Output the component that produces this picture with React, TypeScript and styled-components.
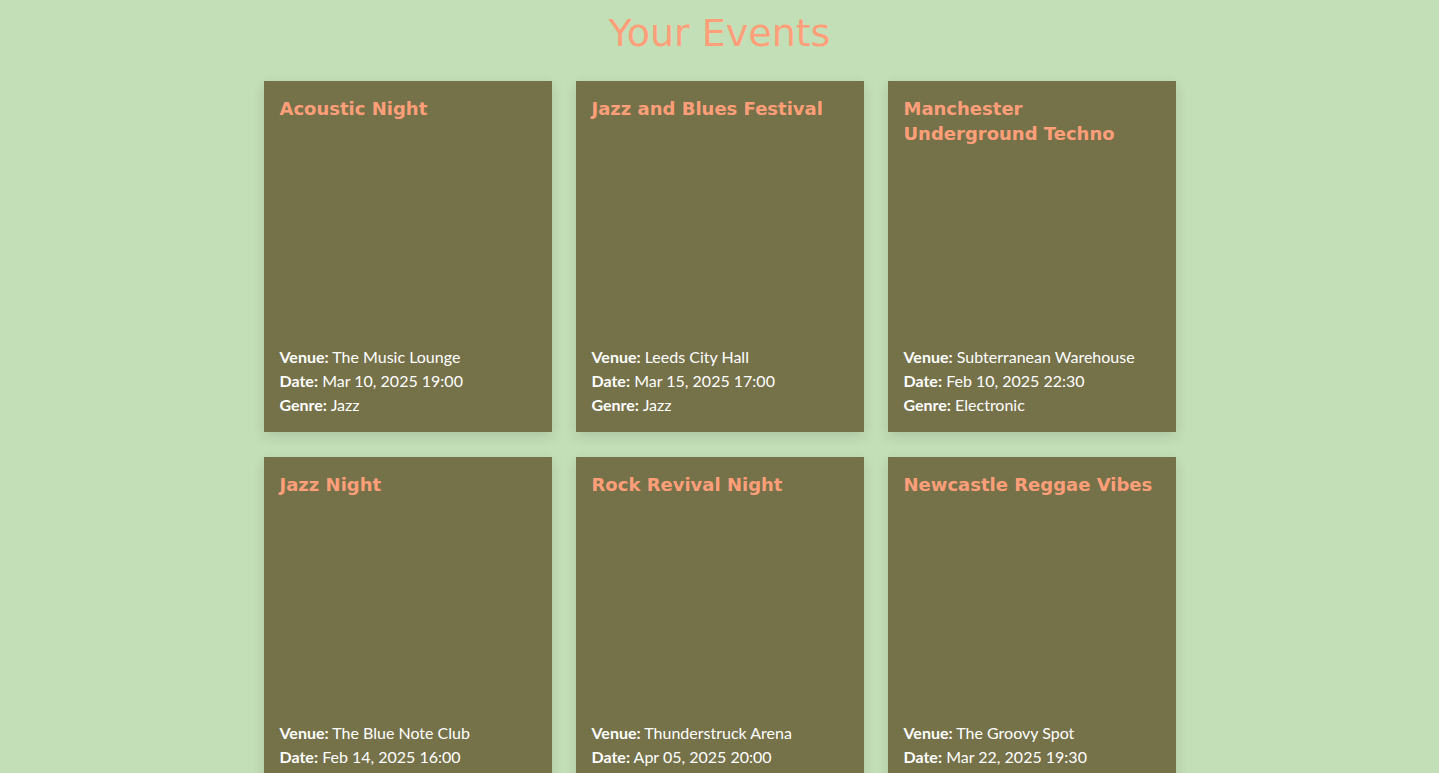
import React from 'react';
import styled, { createGlobalStyle } from 'styled-components';

interface EventItem {
    title: string;
    venue: string;
    date: string;
    genre: string;
}

const events: EventItem[] = [
    { title: 'Acoustic Night', venue: 'The Music Lounge', date: 'Mar 10, 2025 19:00', genre: 'Jazz' },
    { title: 'Jazz and Blues Festival', venue: 'Leeds City Hall', date: 'Mar 15, 2025 17:00', genre: 'Jazz' },
    { title: 'Manchester Underground Techno', venue: 'Subterranean Warehouse', date: 'Feb 10, 2025 22:30', genre: 'Electronic' },
    { title: 'Jazz Night', venue: 'The Blue Note Club', date: 'Feb 14, 2025 16:00', genre: 'Jazz' },
    { title: 'Rock Revival Night', venue: 'Thunderstruck Arena', date: 'Apr 05, 2025 20:00', genre: 'Rock' },
    { title: 'Newcastle Reggae Vibes', venue: 'The Groovy Spot', date: 'Mar 22, 2025 19:30', genre: 'Reggae' },
];

const GlobalStyle = createGlobalStyle`
    body {
        margin: 0;
        background-color: #c3dfb7;
        font-family: 'Lato', 'Open Sans', sans-serif;
    }
`;

const Page = styled.div`
    padding: 8px 0 40px;
`;

const Heading = styled.h1`
    margin: 0 0 23px;
    text-align: center;
    font-family: 'DejaVu Sans', 'Open Sans', sans-serif;
    font-weight: 400;
    font-size: 38px;
    line-height: 50px;
    color: #ff9f7a;
`;

const Grid = styled.div`
    display: grid;
    grid-template-columns: repeat(3, 288px);
    gap: 25px 24px;
    justify-content: center;
`;

const Card = styled.div`
    box-sizing: border-box;
    height: 351px;
    padding: 15px 16px 15px;
    display: flex;
    flex-direction: column;
    justify-content: space-between;
    background-color: #757149;
    box-shadow: 0 4px 12px rgba(0, 0, 0, 0.12);
`;

const Title = styled.h2`
    margin: 0;
    font-family: 'DejaVu Sans', 'Open Sans', sans-serif;
    font-weight: 700;
    font-size: 18px;
    line-height: 25px;
    color: #ff9f7a;
`;

const Details = styled.div`
    color: #ffffff;
    font-size: 16px;
    line-height: 24px;
`;

const Label = styled.strong`
    font-weight: 700;
`;

const EventCard: React.FC<{ event: EventItem }> = ({ event }) => (
    <Card>
        <Title>{event.title}</Title>
        <Details>
            <div><Label>Venue:</Label> {event.venue}</div>
            <div><Label>Date:</Label> {event.date}</div>
            <div><Label>Genre:</Label> {event.genre}</div>
        </Details>
    </Card>
);

const App: React.FC = () => {
    return (
        <Page>
            <GlobalStyle />
            <Heading>Your Events</Heading>
            <Grid>
                {events.map((e) => (
                    <EventCard key={e.title} event={e} />
                ))}
            </Grid>
        </Page>
    );
};

export default App;
